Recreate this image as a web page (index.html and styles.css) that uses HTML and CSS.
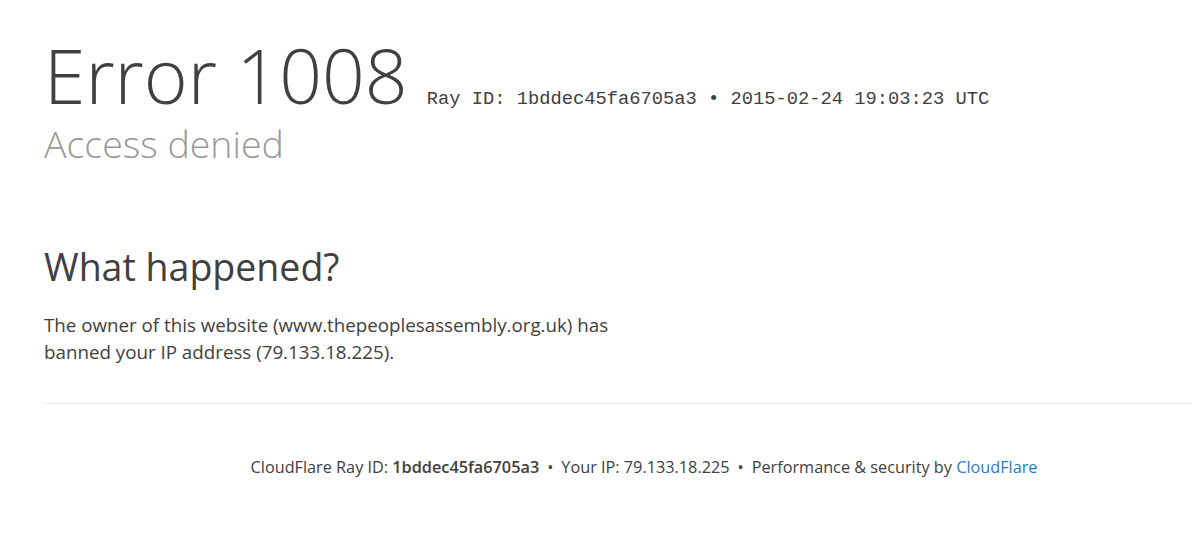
FILE: index.html
```html
<!DOCTYPE html>
<html>
<head>
<meta charset="utf-8">
<link rel="stylesheet" href="styles.css">
</head>
<body>
<div class="page">
  <header class="header">
    <h1 class="title"><span class="code">Error 1008</span><span class="ray">Ray ID: 1bddec45fa6705a3 &bull; 2015-02-24 19:03:23 UTC</span></h1>
    <h2 class="subtitle">Access denied</h2>
  </header>
  <section class="section">
    <h2 class="heading">What happened?</h2>
    <p class="text">The owner of this website (www.thepeoplesassembly.org.uk) has banned your IP address (79.133.18.225).</p>
  </section>
  <footer class="footer">
    <p class="footer-text">CloudFlare Ray ID: <strong>1bddec45fa6705a3</strong><span class="sep">&bull;</span>Your IP: 79.133.18.225<span class="sep">&bull;</span>Performance &amp; security by <a class="link" href="#">CloudFlare</a></p>
  </footer>
</div>
</body>
</html>
```
FILE: styles.css
```css
html, body {
  margin: 0;
  padding: 0;
  background: #fff;
}
body {
  font-family: "Open Sans", "Liberation Sans", sans-serif;
  color: #404040;
  overflow: hidden;
}
.page {
  padding-left: 44px;
}
.header {
  padding-top: 30px;
}
.title {
  margin: 0;
  font-weight: 300;
  font-size: 75px;
  line-height: 90px;
  color: #404040;
  white-space: nowrap;
}
.ray {
  font-family: "Liberation Mono", monospace;
  font-size: 18.75px;
  line-height: 20px;
  font-weight: 400;
  color: #404040;
  margin-left: 19px;
}
.subtitle {
  margin: 0;
  font-weight: 300;
  font-size: 37.5px;
  line-height: 47px;
  color: #999;
}
.section {
  padding-top: 77px;
  padding-bottom: 38px;
  border-bottom: 1px solid #eaeaea;
}
.heading {
  margin: 0;
  font-weight: 400;
  font-size: 37.5px;
  line-height: 45px;
  color: #404040;
}
.text {
  margin: 22px 0 0;
  font-size: 18.75px;
  line-height: 27px;
  max-width: 590px;
}
.footer {
  padding-top: 51px;
  padding-left: 52px;
  text-align: center;
}
.footer-text {
  margin: 0;
  font-size: 16.25px;
  line-height: 24px;
}
.footer-text strong {
  font-weight: 600;
}
.sep {
  margin: 0 8px;
}
.link {
  color: #2f7bbf;
  text-decoration: none;
}
```
